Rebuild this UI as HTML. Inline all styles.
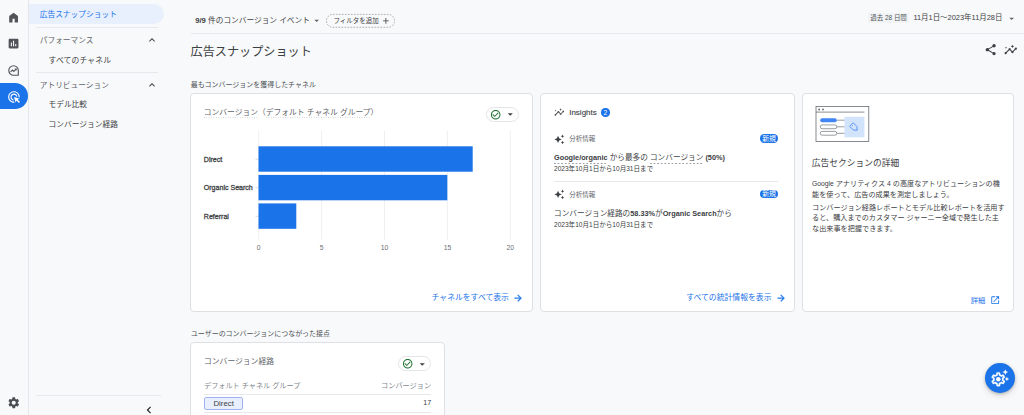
<!DOCTYPE html>
<html lang="ja">
<head>
<meta charset="utf-8">
<title>広告スナップショット</title>
<style>
*{box-sizing:border-box;margin:0;padding:0}
html,body{width:1024px;height:415px;overflow:hidden;background:#f8f9fa}
body{position:relative;font-family:"Liberation Sans","Noto Sans CJK JP",sans-serif;color:#3c4043;-webkit-font-smoothing:antialiased}
.a{position:absolute;white-space:nowrap}
.t{position:absolute;white-space:nowrap;height:12px;line-height:12px}
.card{position:absolute;background:#fff;border:1px solid #dee0e4;border-radius:4px}
.hl{position:absolute;height:1px;background:#e6e8eb}
.blue{color:#1a73e8}
.bd{font-size:7.15px;color:#3c4043}
.la{font-size:0.95em}
.dot{background:linear-gradient(90deg,#cdd0d4 50%,transparent 50%) 0 100%/2.4px 0.8px repeat-x;padding-bottom:1px}
.du{background:linear-gradient(90deg,#9aa0a6 60%,transparent 60%) 0 100%/3.6px 0.8px repeat-x;padding-bottom:1.2px}
b{font-weight:bold;font-size:0.955em}
svg{position:absolute;overflow:visible}
</style>
</head>
<body>

<!-- icon rail -->
<div class="a" id="rail" style="left:0;top:0;width:28.5px;height:415px;border-right:1px solid #e4e6e9"></div>
<div class="a" id="railactive" style="left:0;top:83px;width:28.4px;height:26.2px;background:#1a73e8;border-radius:0 13px 13px 0"></div>

<!-- secondary nav -->
<div class="a" id="navactive" style="left:29px;top:4px;width:134.5px;height:20px;background:#e8f0fe;border-radius:0 10px 10px 0"></div>
<div class="t blue" style="left:39.7px;top:9.1px;font-size:7.72px">広告スナップショット</div>
<div class="hl" style="left:36px;top:26.5px;width:122px"></div>
<div class="t" style="left:39.8px;top:34.9px;font-size:7.7px;color:#5f6368">パフォーマンス</div>
<div class="t" style="left:48.6px;top:54.5px;font-size:7.8px;letter-spacing:0.14px">すべてのチャネル</div>
<div class="hl" style="left:36px;top:72px;width:122px"></div>
<div class="t" style="left:39.8px;top:79.7px;font-size:7.7px;color:#5f6368">アトリビューション</div>
<div class="t" style="left:48.6px;top:99.4px;font-size:7.68px">モデル比較</div>
<div class="t" style="left:48.6px;top:119.3px;font-size:7.72px">コンバージョン経路</div>
<div class="hl" style="left:36px;top:395px;width:125px"></div>

<!-- top bar -->
<div class="t" style="left:195.2px;top:15px;font-size:7.7px"><b style="font-size:1em">9/9</b> 件のコンバージョン イベント</div>
<svg id="chip" style="left:325.8px;top:14px" width="69" height="13.7" viewBox="0 0 69 13.7"><rect x="0.4" y="0.4" width="68.2" height="12.9" rx="6.45" fill="none" stroke="#8e9297" stroke-width="0.7" stroke-dasharray="1.7 1.3"/></svg>
<div class="t" style="left:333.5px;top:14.8px;font-size:6.5px">フィルタを追加</div>
<div class="hl" style="left:190.5px;top:33px;width:834px"></div>
<div class="a" style="left:868px;top:12.8px;width:41px;height:10px;background:#f1f3f4"></div>
<div class="t" style="left:870.3px;top:12px;font-size:6.45px;color:#50545a">過去 28 日間</div>
<div class="t" style="left:913.4px;top:12.3px;font-size:7.45px">11月1日～2023年11月28日</div>

<!-- title -->
<div class="t" style="left:190.6px;top:41.6px;height:20px;line-height:20px;font-size:12.14px">広告スナップショット</div>

<div class="t" style="left:190.7px;top:78.6px;font-size:6.97px;color:#4d5156">最もコンバージョンを獲得したチャネル</div>

<!-- card 1 -->
<div class="card" style="left:190px;top:93px;width:342.6px;height:219.3px"></div>
<div class="t" style="left:203.8px;top:107px;font-size:7.78px;color:#5f6368"><span class="dot">コンバージョン</span>（<span class="dot">デフォルト チャネル グループ</span>）</div>
<div class="a" id="pill1" style="left:486.3px;top:106.6px;width:32.3px;height:15.2px;border:1px solid #e3e5e8;border-radius:8px;background:#fff"></div>


<!-- chart -->
<svg id="chart" style="left:0;top:0" width="1024" height="415" viewBox="0 0 1024 415">
 <g stroke="#ebedef" stroke-width="0.9">
  <line x1="258.7" y1="130.8" x2="258.7" y2="239.7"/>
  <line x1="321.6" y1="130.8" x2="321.6" y2="239.7"/>
  <line x1="384.5" y1="130.8" x2="384.5" y2="239.7"/>
  <line x1="447.4" y1="130.8" x2="447.4" y2="239.7"/>
  <line x1="510.3" y1="130.8" x2="510.3" y2="239.7"/>
 </g>
 <g stroke="#dadce0" stroke-width="1">
  <line x1="255.5" y1="159.2" x2="258.5" y2="159.2"/>
  <line x1="255.5" y1="187.8" x2="258.5" y2="187.8"/>
  <line x1="255.5" y1="216.3" x2="258.5" y2="216.3"/>
 </g>
 <g fill="#1a73e8">
  <rect x="258.5" y="146.3" width="214.2" height="25.4"/>
  <rect x="258.5" y="174.9" width="188.8" height="25.4"/>
  <rect x="258.5" y="203.4" width="37.8" height="25.4"/>
 </g>
 <g font-family="Liberation Sans, sans-serif" font-size="6.75" fill="#6a6e73" text-anchor="middle">
  <text x="258.7" y="250.3">0</text>
  <text x="321.6" y="250.3">5</text>
  <text x="384.5" y="250.3">10</text>
  <text x="447.4" y="250.3">15</text>
  <text x="510.3" y="250.3">20</text>
 </g>
 <g font-family="Liberation Sans, sans-serif" font-size="7.05" fill="#3c4043" stroke="#3c4043" stroke-width="0.28">
  <text x="203.8" y="162">Direct</text>
  <text x="203.8" y="190.4">Organic Search</text>
  <text x="203.8" y="219">Referral</text>
 </g>
</svg>
<div class="t blue" style="left:420px;top:292.4px;width:88.9px;text-align:right;font-size:7.83px">チャネルをすべて表示</div>

<!-- card 2 -->
<div class="card" style="left:540.4px;top:93px;width:254.4px;height:219.3px"></div>
<div class="t" style="left:569.2px;top:107.3px;font-size:8px;-webkit-text-stroke:0.12px #3c4043">Insights</div>


<div class="a" id="badge2" style="left:601.3px;top:107.6px;width:8.5px;height:9.1px;border-radius:4.25px;background:#1a73e8"></div>
<div class="t" style="left:601.2px;top:107px;width:8.6px;text-align:center;font-size:6.8px;color:#fff">2</div>
<div class="t" style="left:569.2px;top:132.7px;font-size:6.5px;color:#5f6368">分析情報</div>
<div class="a" style="left:759.9px;top:134.4px;width:18.3px;height:8.4px;border-radius:4.2px;background:#1a73e8"></div>
<div class="t" style="left:759.9px;top:132.6px;width:18.3px;text-align:center;font-size:6.9px;color:#fff">新規</div>
<div class="t" style="left:554px;top:152.2px;font-size:7.65px"><b class="du">Google/organic</b> から最多の <span class="du">コンバージョン</span> <b>(50%)</b></div>
<div class="t" style="left:554px;top:162.6px;font-size:6.57px">2023年10月1日から10月31日まで</div>
<div class="hl" style="left:554px;top:181.3px;width:224px"></div>
<div class="t" style="left:569.2px;top:188.6px;font-size:6.5px;color:#5f6368">分析情報</div>
<div class="a" style="left:759.9px;top:189.7px;width:18.3px;height:8.4px;border-radius:4.2px;background:#1a73e8"></div>
<div class="t" style="left:759.9px;top:188.3px;width:18.3px;text-align:center;font-size:6.9px;color:#fff">新規</div>
<div class="t" style="left:554px;top:208.2px;font-size:7.65px">コンバージョン経路の<b>58.33%</b>が<b>Organic Search</b>から</div>
<div class="t" style="left:554px;top:218.6px;font-size:6.57px">2023年10月1日から10月31日まで</div>
<div class="t blue" style="left:670px;top:292.4px;width:101.5px;text-align:right;font-size:7.83px">すべての統計情報を表示</div>

<!-- card 3 -->
<div class="card" style="left:802.2px;top:93px;width:212px;height:219.3px"></div>


<svg id="illus" style="left:0;top:0" width="1024" height="415" viewBox="0 0 1024 415">
 <rect x="816" y="106.4" width="52.8" height="35" fill="#fff" stroke="#5f6368" stroke-width="0.75"/>
 <line x1="816" y1="112.1" x2="864.4" y2="112.1" stroke="#3c4043" stroke-width="0.6"/>
 <circle cx="819.1" cy="109.5" r="1" fill="#70757a"/><circle cx="823" cy="109.5" r="1" fill="#70757a"/>
 <rect x="844.5" y="116.8" width="19.9" height="20.5" fill="#d2e3fc"/>
 <g stroke="#70757a" stroke-width="0.7" fill="none">
  <line x1="836.8" y1="120.2" x2="844.5" y2="120.2"/><line x1="836.8" y1="126.8" x2="844.5" y2="126.8"/><line x1="836.8" y1="133.3" x2="844.5" y2="133.3"/>
  <rect x="820.2" y="124.9" width="16.6" height="3.8" rx="1.9" fill="#fff"/>
  <rect x="820.2" y="131.4" width="16.6" height="3.8" rx="1.9" fill="#fff"/>
 </g>
 <rect x="820.2" y="118.25" width="16.6" height="3.9" rx="1.95" fill="#4285f4"/>
 <g transform="translate(854.2 127.3) rotate(45) scale(1.08)" stroke="#4f8df5" stroke-width="0.8" fill="none" stroke-linejoin="round">
  <path d="M-3.700-2.300H1.300L3.900 0 1.300 2.300H-3.700Z"/><circle cx="-2.200" cy="0" r="0.450" fill="#669df6" stroke="none"/>
 </g>
</svg>
<div class="t" style="left:811.7px;top:156.9px;font-size:8.75px">広告セクションの詳細</div>
<div class="t bd" style="left:812px;top:178.3px"><span class="la">Google</span> アナリティクス <span class="la">4</span> の高度なアトリビューションの機</div>
<div class="t bd" style="left:812px;top:188.7px">能を使って、広告の成果を測定しましょう。</div>
<div class="t bd" style="left:812px;top:202.0px">コンバージョン経路レポートとモデル比較レポートを活用す</div>
<div class="t bd" style="left:812px;top:211.9px">ると、購入までのカスタマー ジャーニー全域で発生した主</div>
<div class="t bd" style="left:812px;top:223.0px">な出来事を把握できます。</div>
<div class="t blue" style="left:960px;top:294.6px;width:25.4px;text-align:right;font-size:7.3px">詳細</div>

<div class="t" style="left:190.9px;top:327.7px;font-size:6.97px;color:#4d5156">ユーザーのコンバージョンにつながった接点</div>
<!-- card 4 -->
<div class="card" style="left:190px;top:342px;width:255px;height:90px"></div>


<div class="t" style="left:204px;top:355.6px;font-size:7.8px;color:#5f6368">コンバージョン経路</div>
<div class="a" id="pill2" style="left:398.2px;top:356.1px;width:32.8px;height:15.2px;border:1px solid #e3e5e8;border-radius:8px;background:#fff"></div>
<div class="t" style="left:204px;top:379.5px;font-size:7.15px;color:#80868b">デフォルト チャネル グループ</div>
<div class="t" style="left:371px;top:379.5px;width:60.2px;text-align:right;font-size:7.2px;color:#80868b">コンバージョン</div>
<div class="hl" style="left:204px;top:394px;width:227px"></div>
<div class="a" style="left:204.1px;top:397.1px;width:39px;height:12.7px;border:1.1px solid #9db0ef;border-radius:2.2px;background:#e9effd"></div>
<div class="t" style="left:204px;top:397.9px;width:39.4px;text-align:center;font-size:7.84px">Direct</div>
<div class="t" style="left:401px;top:397px;width:30.2px;text-align:right;font-size:7.2px">17</div>
<div class="hl" style="left:204px;top:412px;width:227px"></div>
<!-- fab -->
<div class="a" id="fab" style="left:984.8px;top:362.5px;width:30.4px;height:30.4px;border-radius:50%;background:#1a73e8;box-shadow:0 1px 3px rgba(60,64,67,.3),0 3px 6px rgba(60,64,67,.15)"></div>

<!-- icons -->
<svg style="left:7.10px;top:10.95px" width="13.2" height="13.2" viewBox="0 0 24 24" fill="#50545a" ><path d="M4 21V9l8-6 8 6v12h-6v-7h-4v7z"/></svg>
<svg style="left:7.35px;top:37.00px" width="13.1" height="13.1" viewBox="0 0 24 24" fill="#50545a" ><path d="M19 3H5c-1.1 0-2 .9-2 2v14c0 1.1.9 2 2 2h14c1.1 0 2-.9 2-2V5c0-1.1-.9-2-2-2zM9 17H7v-7h2v7zm4 0h-2V7h2v10zm4 0h-2v-4h2v4z"/></svg>
<svg style="left:7.10px;top:63.95px" width="13.1" height="13.1" viewBox="0 0 24 24" fill="#50545a" ><path d="M12 3.300a8.700 8.700 0 1 0 0 17.400h8.700v-8.700a8.700 8.700 0 0 0-8.700-8.700z" fill="none" stroke="#50545a" stroke-width="2.100"/><path d="M6.500 14.600l3.500-3.500 2.600 2.600 4.200-4.400" fill="none" stroke="#50545a" stroke-width="2"/><path d="M13.700 8.200h4.100v4.100z" fill="#50545a"/></svg>
<svg style="left:7.05px;top:89.75px" width="13.9" height="13.9" viewBox="0 0 24 24" fill="#fff" ><path d="M11.71 17.99C8.53 17.84 6 15.22 6 12c0-3.31 2.69-6 6-6 3.22 0 5.84 2.53 5.99 5.71l-2.1-.63C15.48 9.31 13.89 8 12 8c-2.21 0-4 1.79-4 4 0 1.89 1.31 3.48 3.08 3.89l.63 2.1zM22 12c0 .3-.01.6-.04.9l-1.97-.59c.01-.1.01-.21.01-.31 0-4.42-3.58-8-8-8s-8 3.58-8 8 3.58 8 8 8c.1 0 .21 0 .31-.01l.59 1.97c-.3.03-.6.04-.9.04-5.52 0-10-4.48-10-10S6.480 2 12 2s10 4.48 10 10zm-3.77 4.26L22 15l-10-3 3 10 1.26-3.77 4.27 4.27 1.98-1.98-4.28-4.260z"/></svg>
<svg style="left:7.10px;top:396.25px" width="13.5" height="13.5" viewBox="0 0 24 24" fill="#4a4e53" ><path d="M19.14 12.94c.04-.3.06-.61.06-.94 0-.32-.02-.64-.07-.94l2.030-1.58c.18-.14.23-.41.12-.61l-1.92-3.32c-.12-.22-.37-.29-.59-.22l-2.39.96c-.5-.38-1.03-.7-1.62-.94l-.36-2.54c-.04-.24-.24-.41-.48-.41h-3.84c-.24 0-.43.17-.47.41l-.36 2.54c-.59.24-1.13.57-1.62.94l-2.39-.96c-.22-.08-.47 0-.59.22L2.740 8.87c-.12.21-.08.47.12.61l2.030 1.58c-.05.3-.09.63-.09.94s.02.64.07.94l-2.030 1.58c-.18.14-.23.41-.12.61l1.920 3.320c.12.22.37.29.59.22l2.390-.96c.5.38 1.030.7 1.620.94l.36 2.540c.05.24.24.41.48.41h3.840c.24 0 .44-.17.47-.41l.36-2.540c.59-.24 1.130-.56 1.620-.94l2.390.96c.22.08.47 0 .59-.22l1.920-3.320c.12-.22.07-.47-.12-.61l-2.010-1.580zM12 15.600c-1.980 0-3.600-1.620-3.600-3.600s1.620-3.600 3.600-3.600 3.600 1.620 3.600 3.600-1.620 3.600-3.600 3.600z"/></svg>
<svg style="left:145.70px;top:34.20px" width="12" height="12" viewBox="0 0 24 24" fill="#44474c" ><path d="M12 8l-6 6 1.410 1.410L12 10.830l4.590 4.580L18 14z"/></svg>
<svg style="left:145.70px;top:79.20px" width="12" height="12" viewBox="0 0 24 24" fill="#44474c" ><path d="M12 8l-6 6 1.410 1.410L12 10.830l4.590 4.580L18 14z"/></svg>
<svg style="left:142.30px;top:402.50px" width="14" height="14" viewBox="0 0 24 24" fill="#202124" ><path d="M15.410 7.410L14 6l-6 6 6 6 1.410-1.410L10.830 12z"/></svg>
<svg style="left:310.75px;top:15.25px" width="11.3" height="11.3" viewBox="0 0 24 24" fill="#5f6368" ><path d="M7 10l5 5 5-5z"/></svg>
<svg style="left:381.40px;top:15.80px" width="9.8" height="9.8" viewBox="0 0 24 24" fill="#3c4043" ><path d="M19 13h-6v6h-2v-6H5v-2h6V5h2v6h6v2z"/></svg>
<svg style="left:1005.75px;top:12.55px" width="11.3" height="11.3" viewBox="0 0 24 24" fill="#5f6368" ><path d="M7 10l5 5 5-5z"/></svg>
<svg style="left:984.20px;top:42.90px" width="13.4" height="13.4" viewBox="0 0 24 24" fill="#3c4043" ><path d="M18 16.080c-.76 0-1.440.3-1.960.77L8.910 12.700c.05-.23.09-.46.09-.7s-.04-.47-.09-.7l7.050-4.110c.54.5 1.250.81 2.040.81 1.660 0 3-1.340 3-3s-1.340-3-3-3-3 1.340-3 3c0 .24.04.47.09.7L8.040 9.810C7.500 9.310 6.790 9 6 9c-1.660 0-3 1.340-3 3s1.340 3 3 3c.79 0 1.500-.31 2.040-.81l7.120 4.160c-.05.21-.08.43-.08.65 0 1.610 1.310 2.920 2.920 2.920 1.610 0 2.920-1.310 2.920-2.920s-1.310-2.920-2.920-2.920z"/></svg>
<svg style="left:1003.55px;top:43.15px" width="13.5" height="13.5" viewBox="0 0 24 24" fill="#3c4043" ><path d="M21 8c-1.450 0-2.260 1.440-1.930 2.510l-3.550 3.560c-.3-.09-.74-.09-1.040 0l-2.550-2.550C12.270 10.450 11.460 9 10 9c-1.450 0-2.270 1.440-1.930 2.520l-4.560 4.550C2.440 15.740 1 16.550 1 18c0 1.100.9 2 2 2 1.450 0 2.260-1.440 1.930-2.510l4.550-4.560c.3.09.74.09 1.040 0l2.550 2.550C12.730 16.550 13.540 18 15 18c1.450 0 2.270-1.440 1.930-2.520l3.560-3.550c1.070.33 2.510-.48 2.510-1.930 0-1.100-.9-2-2-2z"/><path d="M15 9l.94-2.070L18 6l-2.060-.93L15 3l-.92 2.070L12 6l2.080.93z"/><path d="M3.500 11L4 9l2-.5L4 8l-.5-2L3 8l-2 .5L3 9z"/></svg>
<svg style="left:489.90px;top:108.50px" width="11.4" height="11.4" viewBox="0 0 24 24" fill="#1e7232" ><path d="M16.590 7.580L10 14.170l-3.590-3.580L5 12l5 5 8-8zM12 2C6.480 2 2 6.480 2 12s4.480 10 10 10 10-4.480 10-10S17.520 2 12 2zm0 18c-4.420 0-8-3.580-8-8s3.580-8 8-8 8 3.580 8 8-3.580 8-8 8z"/></svg>
<svg style="left:503.65px;top:108.25px" width="12.5" height="12.5" viewBox="0 0 24 24" fill="#3c4043" ><path d="M7 10l5 5 5-5z"/></svg>
<svg style="left:513.35px;top:293.05px" width="10.3" height="10.3" viewBox="0 0 24 24" fill="#1a73e8" ><path d="M12 4l-1.410 1.410L16.170 11H4v2h12.170l-5.580 5.590L12 20l8-8z" stroke="#1a73e8" stroke-width="0.9"/></svg>
<svg style="left:553.90px;top:106.90px" width="10.6" height="10.6" viewBox="0 0 24 24" fill="#4a4e53" ><path d="M21 8c-1.450 0-2.260 1.440-1.930 2.510l-3.550 3.560c-.3-.09-.74-.09-1.040 0l-2.550-2.550C12.270 10.450 11.460 9 10 9c-1.450 0-2.270 1.440-1.930 2.520l-4.560 4.550C2.440 15.740 1 16.550 1 18c0 1.100.9 2 2 2 1.450 0 2.260-1.440 1.930-2.510l4.550-4.560c.3.09.74.09 1.040 0l2.550 2.550C12.730 16.550 13.540 18 15 18c1.450 0 2.270-1.440 1.930-2.520l3.560-3.550c1.070.33 2.510-.48 2.510-1.930 0-1.100-.9-2-2-2z"/><path d="M15 9l.94-2.070L18 6l-2.060-.93L15 3l-.92 2.070L12 6l2.080.93z"/><path d="M3.500 11L4 9l2-.5L4 8l-.5-2L3 8l-2 .5L3 9z"/></svg>
<svg style="left:554.20px;top:133.80px" width="10.8" height="10.8" viewBox="0 0 24 24" fill="#3c4043" ><path d="M19 9l1.250-2.750L23 5l-2.750-1.250L19 1l-1.250 2.750L15 5l2.750 1.250L19 9zm-7.500.5L9 4 6.500 9.500 1 12l5.500 2.500L9 20l2.500-5.500L17 12l-5.500-2.500zM19 15l-1.250 2.750L15 19l2.750 1.250L19 23l1.250-2.750L23 19l-2.750-1.250L19 15z"/></svg>
<svg style="left:554.20px;top:189.00px" width="10.8" height="10.8" viewBox="0 0 24 24" fill="#3c4043" ><path d="M19 9l1.250-2.750L23 5l-2.750-1.250L19 1l-1.250 2.750L15 5l2.750 1.250L19 9zm-7.500.5L9 4 6.500 9.500 1 12l5.500 2.500L9 20l2.500-5.500L17 12l-5.500-2.500zM19 15l-1.250 2.750L15 19l2.750 1.250L19 23l1.250-2.750L23 19l-2.750-1.250L19 15z"/></svg>
<svg style="left:776.05px;top:293.05px" width="10.3" height="10.3" viewBox="0 0 24 24" fill="#1a73e8" ><path d="M12 4l-1.410 1.410L16.170 11H4v2h12.170l-5.580 5.590L12 20l8-8z" stroke="#1a73e8" stroke-width="0.9"/></svg>
<svg style="left:990.10px;top:295.10px" width="10.4" height="10.4" viewBox="0 0 24 24" fill="#1a73e8" ><path d="M19 19H5V5h7V3H5c-1.110 0-2 .9-2 2v14c0 1.100.89 2 2 2h14c1.100 0 2-.9 2-2v-7h-2v7zM14 3v2h3.590l-9.830 9.830 1.410 1.410L19 6.410V10h2V3h-7z"/></svg>
<svg style="left:402.40px;top:358.00px" width="11.4" height="11.4" viewBox="0 0 24 24" fill="#1e7232" ><path d="M16.590 7.580L10 14.170l-3.590-3.580L5 12l5 5 8-8zM12 2C6.480 2 2 6.480 2 12s4.480 10 10 10 10-4.480 10-10S17.520 2 12 2zm0 18c-4.420 0-8-3.580-8-8s3.580-8 8-8 8 3.580 8 8-3.580 8-8 8z"/></svg>
<svg style="left:415.65px;top:357.75px" width="12.5" height="12.5" viewBox="0 0 24 24" fill="#3c4043" ><path d="M7 10l5 5 5-5z"/></svg>
<svg style="left:989.60px;top:371.20px" width="16.6" height="16.6" viewBox="0 0 24 24" fill="#fff"><path d="M19.430 12.980c.04-.32.07-.64.07-.98 0-.34-.03-.66-.07-.98l2.110-1.650c.19-.15.24-.42.12-.64l-2-3.460c-.09-.16-.26-.25-.44-.25-.06 0-.12.010-.17.030l-2.490 1c-.52-.4-1.080-.73-1.690-.98l-.38-2.650C14.460 2.180 14.250 2 14 2h-4c-.25 0-.46.18-.49.42l-.38 2.650c-.61.25-1.170.59-1.690.98l-2.490-1c-.06-.02-.12-.03-.18-.03-.17 0-.34.09-.43.25l-2 3.460c-.13.22-.07.49.12.64l2.110 1.650c-.04.32-.07.65-.07.98 0 .33.03.66.07.98l-2.110 1.650c-.19.15-.24.42-.12.64l2 3.460c.09.16.26.25.44.25.06 0 .12-.010.17-.030l2.490-1c.52.4 1.080.73 1.690.98l.38 2.650c.03.24.24.42.49.42h4c.25 0 .46-.18.49-.42l.38-2.650c.61-.25 1.170-.59 1.690-.98l2.490 1c.06.02.12.03.18.03.17 0 .34-.09.43-.25l2-3.460c.12-.22.07-.49-.12-.64l-2.110-1.650zm-1.980-1.710c.04.31.05.52.05.73 0 .21-.02.43-.05.73l-.14 1.130.89.7 1.080.84-.7 1.210-1.270-.51-1.040-.42-.9.68c-.43.32-.84.56-1.250.73l-1.060.43-.16 1.130-.2 1.350h-1.400l-.19-1.350-.16-1.130-1.060-.43c-.43-.18-.83-.41-1.230-.71l-.91-.7-1.060.43-1.270.51-.7-1.210 1.080-.84.89-.7-.14-1.130c-.03-.31-.05-.54-.05-.74s.02-.43.05-.73l.14-1.130-.89-.7-1.080-.84.7-1.210 1.270.51 1.040.42.9-.68c.43-.32.84-.56 1.250-.73l1.060-.43.16-1.130.2-1.350h1.390l.19 1.350.16 1.130 1.060.43c.43.18.83.41 1.230.71l.91.7 1.060-.43 1.270-.51.7 1.210-1.070.85-.89.7.14 1.130z" stroke="#fff" stroke-width="0.5"/><circle cx="12" cy="12" r="3.300"/></svg>
<svg style="left:0;top:0" width="1024" height="415" viewBox="0 0 1024 415" fill="#fff"><path d="M1005.300 369.200l.8 2.100 2.100.8-2.100.8-.8 2.100-.8-2.100-2.100-.8 2.100-.8z"/><path d="M1006.900 376.700l.65 1.650 1.650.65-1.650.65-.65 1.650-.65-1.650-1.650-.65 1.650-.65z"/></svg>
</body>
</html>
